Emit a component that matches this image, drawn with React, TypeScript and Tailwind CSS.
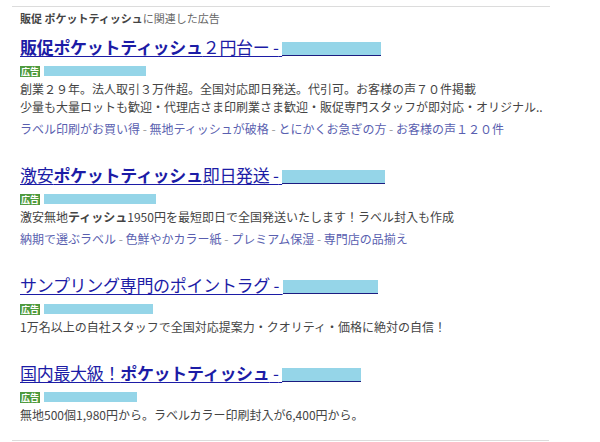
import type { ReactNode } from 'react';

type Ad = {
  title: ReactNode;
  boxW: number;
  urlW: number;
  desc: ReactNode[];
  links?: string[];
};

const ads: Ad[] = [
  {
    title: (
      <>
        <b>販促ポケットティッシュ</b>２円台ー -{' '}
      </>
    ),
    boxW: 99,
    urlW: 102,
    desc: [
      '創業２９年。法人取引３万件超。全国対応即日発送。代引可。お客様の声７０件掲載',
      '少量も大量ロットも歓迎・代理店さま印刷業さま歓迎・販促専門スタッフが即対応・オリジナル..',
    ],
    links: ['ラベル印刷がお買い得', '無地ティッシュが破格', 'とにかくお急ぎの方', 'お客様の声１２０件'],
  },
  {
    title: (
      <>
        激安<b>ポケットティッシュ</b>即日発送 -{' '}
      </>
    ),
    boxW: 103,
    urlW: 112,
    desc: [
      <>
        激安無地<b>ティッシュ</b>1950円を最短即日で全国発送いたします！ラベル封入も作成
      </>,
    ],
    links: ['納期で選ぶラベル', '色鮮やかカラー紙', 'プレミアム保湿', '専門店の品揃え'],
  },
  {
    title: <>サンプリング専門のポイントラグ - </>,
    boxW: 95,
    urlW: 109,
    desc: ['1万名以上の自社スタッフで全国対応提案力・クオリティ・価格に絶対の自信！'],
  },
  {
    title: (
      <>
        国内最大級！<b>ポケットティッシュ</b> -{' '}
      </>
    ),
    boxW: 79,
    urlW: 93,
    desc: ['無地500個1,980円から。ラベルカラー印刷封入が6,400円から。'],
  },
];

export default function App() {
  return (
    <div
      className="w-[600px] h-[442px] overflow-hidden bg-white"
      style={{ fontFamily: '"Noto Sans CJK JP", "Liberation Sans", sans-serif' }}
    >
      <div className="mt-[6px] ml-[12px] w-[538px] border-t border-[#dcdcdc]" />

      <div className="px-[20px]">
        {/* header */}
        <p className="mt-[2px] h-[18px] text-[11px] leading-[18px] text-[#666]">
          <b className="text-[#444]">販促 ポケットティッシュ</b>に関連した広告
        </p>

        <div className="mt-[8px] flex flex-col gap-[25px]">
          {ads.map((ad, i) => (
            <AdBlock key={i} ad={ad} />
          ))}
        </div>
      </div>

      <div className="mt-[16px] ml-[12px] w-[537px] border-t border-[#dcdcdc]" />
    </div>
  );
}

function AdBlock({ ad }: { ad: Ad }) {
  return (
    <div>
      <a className="block h-[24px] text-[17px] leading-[24px] tracking-[-0.3px] text-[#1c1ca6] underline underline-offset-[2px] whitespace-nowrap">
        {ad.title}
        <span
          className="inline-block h-[14px] -mb-[2px] bg-[#95d5e8] border-b border-[#1c1c80] align-baseline"
          style={{ width: ad.boxW }}
        />
      </a>

      <div className="mt-[5px] h-[14px] flex items-center gap-[4px]">
        <span className="h-[11px] w-[20px] bg-[#4f9a3e] text-white text-[9px] leading-[11px] text-center font-bold">
          広告
        </span>
        <span className="h-[10px] bg-[#95d5e8]" style={{ width: ad.urlW }} />
      </div>

      <div className="mt-[2px] text-[12px] leading-[18px] text-[#444] whitespace-nowrap">
        {ad.desc.map((line, i) => (
          <p key={i}>{line}</p>
        ))}
      </div>

      {ad.links && (
        <p className="mt-[4px] text-[12px] leading-[18px] text-[#5a5fb0] whitespace-nowrap">
          {ad.links.map((l, i) => (
            <span key={i}>
              {i > 0 && <span className="text-[#999]"> - </span>}
              {l}
            </span>
          ))}
        </p>
      )}
    </div>
  );
}
